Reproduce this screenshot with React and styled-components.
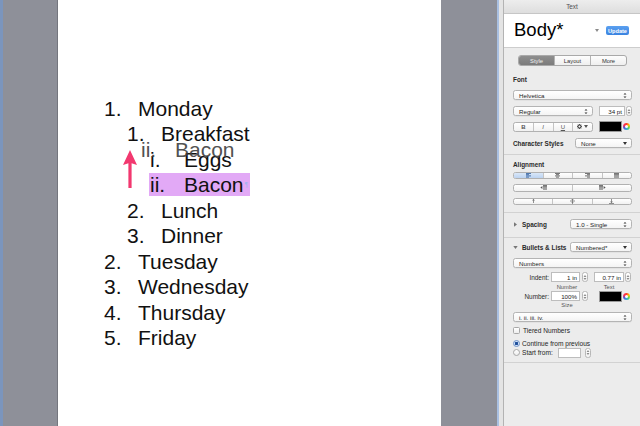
import React from 'react';
import styled, { createGlobalStyle } from 'styled-components';

const Global = createGlobalStyle`
  html, body { margin: 0; padding: 0; width: 640px; height: 426px; overflow: hidden; }
  body { font-family: "Liberation Sans", Arial, sans-serif; }
  #root { width: 640px; height: 426px; }
`;

const Screen = styled.div`
  display: flex;
  width: 640px;
  height: 426px;
  overflow: hidden;
  background: #8e9099;
`;

const EdgeStrip = styled.div`
  flex: 0 0 3px;
  background: #7b95bd;
`;

const Canvas = styled.div`
  flex: 0 0 494px;
  display: flex;
  padding-left: 55px;
  box-sizing: border-box;
  background: #8e9099;
`;

const Page = styled.div`
  position: relative;
  flex: 0 0 383px;
  height: 100%;
  background: #fff;
  box-shadow: -1px 0 0 #74767e;
  padding-top: 96px;
  box-sizing: border-box;
  font-family: "Liberation Sans", Arial, sans-serif;
  font-size: 21px;
  line-height: 25.45px;
  color: #111;
`;

const Row = styled.div`
  display: flex;
  height: 25.45px;
  padding-left: ${p => 46 + 23 * (p.$level - 1)}px;
  white-space: nowrap;
`;

const Num = styled.span`
  flex: 0 0 34px;
`;

const Highlight = styled.span`
  display: flex;
  margin-left: -1px;
  padding-left: 1px;
  background: linear-gradient(#e2a9f6, #e2a9f6) 0 1px / 100% 23px no-repeat;
`;

const EndMark = styled.span`
  display: inline-block;
  width: 5px;
  font-size: 7px;
  color: #9db4ee;
  line-height: 25px;
  padding-left: 1px;
`;

const Ghost = styled.div`
  position: absolute;
  left: 83px;
  top: 137px;
  display: flex;
  color: #404040;
  opacity: 0.9;
  white-space: nowrap;
`;

const ArrowSvg = styled.svg`
  position: absolute;
  left: 64px;
  top: 150px;
`;

const Gutter = styled.div`
  flex: 0 0 6px;
  display: flex;
`;
const GutterLine = styled.div`
  flex: 0 0 2px;
  background: #a9c0e2;
`;
const GutterFill = styled.div`
  flex: 1;
  background: #e4e4e4;
`;

const Panel = styled.div`
  flex: 0 0 136px;
  display: flex;
  flex-direction: column;
  background: #ececec;
  border-left: 1px solid #b3b3b3;
  font-family: "Liberation Sans", Arial, sans-serif;
  font-size: 6.6px;
  color: #1e1e1e;
`;

const Header = styled.div`
  height: 13px;
  display: flex;
  align-items: center;
  justify-content: center;
  background: linear-gradient(#ededed, #dedede);
  border-bottom: 1px solid #c6c6c6;
  color: #505050;
  font-size: 6.4px;
`;

const StyleBox = styled.div`
  height: 33px;
  display: flex;
  align-items: center;
  padding: 0 11px 0 10px;
  background: #fff;
  border-bottom: 1px solid #cdcdcd;
`;

const StyleName = styled.div`
  flex: 1;
  font-size: 18.5px;
  color: #000;
  padding-bottom: 2px;
`;

const DownTri = styled.span`
  width: 0;
  height: 0;
  border-left: 2.5px solid transparent;
  border-right: 2.5px solid transparent;
  border-top: 3.5px solid ${p => p.$color || '#8a8a8a'};
  margin-right: ${p => p.$mr || 0}px;
`;

const UpdateBtn = styled.div`
  width: 23px;
  height: 9px;
  border-radius: 2px;
  background: linear-gradient(#5aa0f0, #3a83e0);
  color: #fff;
  font-size: 5.6px;
  font-weight: bold;
  display: flex;
  align-items: center;
  justify-content: center;
`;

const Tabs = styled.div`
  display: flex;
  margin: 7px 0 0 14px;
  width: 109px;
  height: 11px;
  border: 1px solid #a9a9a9;
  border-radius: 3px;
  box-sizing: border-box;
  overflow: hidden;
  background: linear-gradient(#fdfdfd, #efefef);
`;

const Tab = styled.div`
  flex: 1;
  display: flex;
  align-items: center;
  justify-content: center;
  font-size: 5.8px;
  color: ${p => (p.$active ? '#f2f2f2' : '#333')};
  background: ${p => (p.$active ? 'linear-gradient(#8e8e8e, #7b7b7b)' : 'transparent')};
  & + & { border-left: 1px solid #b3b3b3; }
`;

const Section = styled.div`
  display: flex;
  flex-direction: column;
  padding: ${p => p.$pt}px 8px ${p => p.$pb}px 9px;
  border-bottom: ${p => (p.$noBorder ? 'none' : '1px solid #d2d2d2')};
`;

const Label = styled.div`
  height: 8px;
  line-height: 8px;
  font-weight: bold;
  font-size: 6.4px;
  color: #2a2a2a;
  margin-top: ${p => p.$mt || 0}px;
`;

const HRow = styled.div`
  display: flex;
  align-items: center;
  height: ${p => p.$h || 10}px;
  margin-top: ${p => p.$mt || 0}px;
  gap: ${p => p.$gap || 0}px;
`;

const Popup = styled.div`
  flex: ${p => (p.$w ? `0 0 ${p.$w}px` : '1')};
  height: ${p => p.$h || 10}px;
  box-sizing: border-box;
  display: flex;
  align-items: center;
  padding: 0 4px 0 5px;
  margin-left: ${p => p.$ml || 0}px;
  border: 1px solid #b4b4b4;
  border-radius: 2.5px;
  background: linear-gradient(#ffffff, #f4f4f4);
  box-shadow: 0 0.5px 0 rgba(0,0,0,0.08);
  font-size: 6.2px;
  color: #1e1e1e;
  white-space: nowrap;
`;

const PopupText = styled.span`
  flex: 1;
`;

const SideLabel = styled.div`
  flex: 1;
  font-size: 6.4px;
  font-weight: ${p => (p.$bold ? 'bold' : 'normal')};
  color: #2a2a2a;
  display: flex;
  align-items: center;
  gap: 4px;
`;

const Field = styled.div`
  flex: 0 0 ${p => p.$w}px;
  height: 10px;
  box-sizing: border-box;
  border: 1px solid #bdbdbd;
  background: #fff;
  display: flex;
  align-items: center;
  justify-content: flex-end;
  padding-right: 2px;
  font-size: 6.2px;
  color: #222;
  margin-left: ${p => p.$ml || 0}px;
`;

const Stepper = styled.div`
  flex: 0 0 6px;
  height: 10px;
  box-sizing: border-box;
  border: 1px solid #b8b8b8;
  border-radius: 2.5px;
  background: linear-gradient(#fff, #f0f0f0);
  margin-left: ${p => p.$ml || 1}px;
  display: flex;
  align-items: center;
  justify-content: center;
`;

const Segmented = styled.div`
  flex: ${p => (p.$w ? `0 0 ${p.$w}px` : '1')};
  height: ${p => p.$h || 10}px;
  display: flex;
  box-sizing: border-box;
  border: 1px solid #b1b1b1;
  border-radius: 2.5px;
  overflow: hidden;
  background: linear-gradient(#ffffff, #f1f1f1);
  margin-top: ${p => p.$mt || 0}px;
`;

const Seg = styled.div`
  flex: 1;
  display: flex;
  align-items: center;
  justify-content: center;
  font-size: 6px;
  font-weight: ${p => (p.$bold ? 'bold' : 'normal')};
  font-style: ${p => (p.$italic ? 'italic' : 'normal')};
  text-decoration: ${p => (p.$underline ? 'underline' : 'none')};
  color: #555;
  background: ${p => (p.$active ? 'linear-gradient(#d9e7f8, #bcd3f1)' : 'transparent')};
  & + & { border-left: 1px solid #c4c4c4; }
`;

const ColorWell = styled.div`
  flex: 0 0 23px;
  height: 11px;
  box-sizing: border-box;
  border: 1px solid #9a9a9a;
  background: #000;
  margin-left: ${p => p.$ml || 0}px;
`;

const Wheel = styled.div`
  flex: 0 0 7px;
  height: 7px;
  border-radius: 50%;
  margin-left: 1px;
  background: conic-gradient(#ff3b30, #ffcc00, #4cd964, #34aadc, #5856d6, #ff2d55, #ff3b30);
  display: flex;
  align-items: center;
  justify-content: center;
  &::after {
    content: '';
    width: 3px;
    height: 3px;
    border-radius: 50%;
    background: #fff;
  }
`;

const SubLabels = styled.div`
  display: flex;
  height: 7px;
  align-items: center;
  margin-top: ${p => p.$mt || 0}px;
  font-size: 5.8px;
  color: #555;
`;

const SubLabel = styled.span`
  position: relative;
  width: 0;
  display: flex;
  justify-content: center;
  margin-left: ${p => p.$ml}px;
  white-space: nowrap;
`;

const RightLabel = styled.span`
  flex: 0 0 38px;
  text-align: right;
  padding-right: 2px;
  box-sizing: border-box;
  font-size: 6.4px;
  color: #2a2a2a;
`;

const Check = styled.span`
  width: 7px;
  height: 7px;
  box-sizing: border-box;
  border: 1px solid #a8a8a8;
  border-radius: ${p => (p.$round ? '50%' : '1.5px')};
  background: ${p => (p.$on ? 'radial-gradient(circle, #1f4f9a 0 1.4px, #cfe0f6 1.6px)' : 'linear-gradient(#fff, #eee)')};
  border-color: ${p => (p.$on ? '#6f93c9' : '#a8a8a8')};
  flex-shrink: 0;
`;

const Arrows = () => (
  <svg width="4" height="7" viewBox="0 0 4 7">
    <path d="M0.5 2.6 L2 1 L3.5 2.6 Z M0.5 4.4 L2 6 L3.5 4.4 Z" fill="#333" />
  </svg>
);

const StepArrows = () => (
  <svg width="4" height="7" viewBox="0 0 4 7">
    <path d="M0.6 2.8 L2 1.2 L3.4 2.8 Z M0.6 4.2 L2 5.8 L3.4 4.2 Z" fill="#666" />
  </svg>
);

const AlignIcon = ({ kind, color = '#555' }) => {
  const lines = {
    left: [[0, 5], [0, 3], [0, 5], [0, 3]],
    center: [[0, 5], [1, 3], [0, 5], [1, 3]],
    right: [[0, 5], [2, 3], [0, 5], [2, 3]],
    justify: [[0, 5], [0, 5], [0, 5], [0, 5]],
  }[kind];
  return (
    <svg width="5" height="5" viewBox="0 0 5 5">
      {lines.map(([x, w], i) => (
        <rect key={i} x={x} y={i * 1.2 + 0.1} width={w} height="0.8" fill={color} />
      ))}
    </svg>
  );
};

const IndentIcon = ({ dir }) => (
  <svg width="7" height="5" viewBox="0 0 7 5">
    {[0, 1, 2, 3].map(i => (
      <rect key={i} x={dir === 'out' ? 3 : 0} y={i * 1.2 + 0.1} width="4" height="0.8" fill="#555" />
    ))}
    {dir === 'out' ? (
      <path d="M2.4 1 L0.4 2.5 L2.4 4 Z" fill="#555" />
    ) : (
      <path d="M4.6 1 L6.6 2.5 L4.6 4 Z" fill="#555" />
    )}
  </svg>
);

const VAlignIcon = ({ pos }) => (
  <svg width="5" height="6" viewBox="0 0 5 6">
    {pos === 'top' && <><rect x="0" y="0" width="5" height="0.8" fill="#777" /><rect x="2.1" y="1" width="0.8" height="4" fill="#777" /><path d="M1 2.6 L2.5 1 L4 2.6 Z" fill="#777" /></>}
    {pos === 'mid' && <><rect x="0" y="2.6" width="5" height="0.8" fill="#777" /><rect x="2.1" y="0" width="0.8" height="6" fill="#777" /><path d="M1.2 1 L2.5 2.3 L3.8 1 Z M1.2 5 L2.5 3.7 L3.8 5 Z" fill="#777" /></>}
    {pos === 'bottom' && <><rect x="0" y="5.2" width="5" height="0.8" fill="#777" /><rect x="2.1" y="1" width="0.8" height="4" fill="#777" /><path d="M1 3.4 L2.5 5 L4 3.4 Z" fill="#777" /></>}
  </svg>
);

const GearWrap = styled.span`
  display: flex;
  align-items: center;
  gap: 1.5px;
`;

const Gear = () => (
  <GearWrap>
    <svg width="5" height="5" viewBox="0 0 10 10">
      <circle cx="5" cy="5" r="3.2" fill="none" stroke="#444" strokeWidth="2.2" />
      <path d="M5 0 V2 M5 8 V10 M0 5 H2 M8 5 H10 M1.5 1.5 L2.8 2.8 M7.2 7.2 L8.5 8.5 M8.5 1.5 L7.2 2.8 M1.5 8.5 L2.8 7.2" stroke="#444" strokeWidth="1.6" />
    </svg>
    <DownTri $color="#555" />
  </GearWrap>
);

const Disclosure = ({ open }) => (
  <svg width="5" height="5" viewBox="0 0 5 5">
    {open ? <path d="M0.3 1 L4.7 1 L2.5 4 Z" fill="#777" /> : <path d="M1 0.3 L4 2.5 L1 4.7 Z" fill="#777" />}
  </svg>
);

const docRows = [
  { level: 1, num: '1.', text: 'Monday' },
  { level: 2, num: '1.', text: 'Breakfast' },
  { level: 3, num: 'i.', text: 'Eggs' },
  { level: 3, num: 'ii.', text: 'Bacon', selected: true },
  { level: 2, num: '2.', text: 'Lunch' },
  { level: 2, num: '3.', text: 'Dinner' },
  { level: 1, num: '2.', text: 'Tuesday' },
  { level: 1, num: '3.', text: 'Wednesday' },
  { level: 1, num: '4.', text: 'Thursday' },
  { level: 1, num: '5.', text: 'Friday' },
];

export default function App() {
  return (
    <>
      <Global />
      <Screen>
        <EdgeStrip />
        <Canvas>
          <Page>
            {docRows.map((r, i) => (
              <Row key={i} $level={r.level}>
                {r.selected ? (
                  <Highlight>
                    <Num>{r.num}</Num>
                    <span>{r.text}</span>
                    <EndMark>¶</EndMark>
                  </Highlight>
                ) : (
                  <>
                    <Num>{r.num}</Num>
                    <span>{r.text}</span>
                  </>
                )}
              </Row>
            ))}
            <Ghost>
              <Num>ii.</Num>
              <span>Bacon</span>
            </Ghost>
            <ArrowSvg width="16" height="40" viewBox="0 0 16 40">
              <path d="M8 0 L15 15 L9.6 13.2 L9.6 38 L6.4 38 L6.4 13.2 L1 15 Z" fill="#f2386f" />
            </ArrowSvg>
          </Page>
        </Canvas>
        <Gutter>
          <GutterLine />
          <GutterFill />
        </Gutter>
        <Panel>
          <Header>Text</Header>
          <StyleBox>
            <StyleName>Body*</StyleName>
            <DownTri $mr={7} />
            <UpdateBtn>Update</UpdateBtn>
          </StyleBox>
          <Tabs>
            <Tab $active>Style</Tab>
            <Tab>Layout</Tab>
            <Tab>More</Tab>
          </Tabs>

          <Section $pt={10} $pb={6}>
            <Label>Font</Label>
            <HRow $mt={6}>
              <Popup><PopupText>Helvetica</PopupText><Arrows /></Popup>
            </HRow>
            <HRow $mt={6}>
              <Popup $w={80}><PopupText>Regular</PopupText><Arrows /></Popup>
              <Field $w={26} $ml={6}>34 pt</Field>
              <Stepper><StepArrows /></Stepper>
            </HRow>
            <HRow $mt={5} $h={11}>
              <Segmented $w={80} $h={10}>
                <Seg $bold>B</Seg>
                <Seg $italic>I</Seg>
                <Seg $underline>U</Seg>
                <Seg><Gear /></Seg>
              </Segmented>
              <ColorWell $ml={6} />
              <Wheel />
            </HRow>
            <HRow $mt={6}>
              <SideLabel $bold>Character Styles</SideLabel>
              <Popup $w={57}><PopupText>None</PopupText><DownTri $color="#333" /></Popup>
            </HRow>
          </Section>

          <Section $pt={6} $pb={7}>
            <Label>Alignment</Label>
            <Segmented $mt={3}>
              <Seg $active><AlignIcon kind="left" color="#2f5d9c" /></Seg>
              <Seg><AlignIcon kind="center" /></Seg>
              <Seg><AlignIcon kind="right" /></Seg>
              <Seg><AlignIcon kind="justify" /></Seg>
            </Segmented>
            <Segmented $mt={5}>
              <Seg><IndentIcon dir="out" /></Seg>
              <Seg><IndentIcon dir="in" /></Seg>
            </Segmented>
            <Segmented $mt={6}>
              <Seg><VAlignIcon pos="top" /></Seg>
              <Seg><VAlignIcon pos="mid" /></Seg>
              <Seg><VAlignIcon pos="bottom" /></Seg>
            </Segmented>
          </Section>

          <Section $pt={6} $pb={8}>
            <HRow>
              <SideLabel $bold><Disclosure /> Spacing</SideLabel>
              <Popup $w={62}><PopupText>1.0 - Single</PopupText><Arrows /></Popup>
            </HRow>
          </Section>

          <Section $pt={4} $pb={4}>
            <HRow>
              <SideLabel $bold><Disclosure open /> Bullets &amp; Lists</SideLabel>
              <Popup $w={62}><PopupText>Numbered*</PopupText><DownTri $color="#333" /></Popup>
            </HRow>
            <HRow $mt={6}>
              <Popup><PopupText>Numbers</PopupText><Arrows /></Popup>
            </HRow>
            <HRow $mt={4}>
              <RightLabel>Indent:</RightLabel>
              <Field $w={29}>1 in</Field>
              <Stepper $ml={2}><StepArrows /></Stepper>
              <Field $w={30} $ml={6}>0.77 in</Field>
              <Stepper><StepArrows /></Stepper>
            </HRow>
            <SubLabels $mt={1}>
              <SubLabel $ml={54}>Number</SubLabel>
              <SubLabel $ml={42}>Text</SubLabel>
            </SubLabels>
            <HRow $mt={1}>
              <RightLabel>Number:</RightLabel>
              <Field $w={29}>100%</Field>
              <Stepper $ml={2}><StepArrows /></Stepper>
              <ColorWell $ml={11} />
              <Wheel />
            </HRow>
            <SubLabels>
              <SubLabel $ml={54}>Size</SubLabel>
            </SubLabels>
            <HRow $mt={4}>
              <Popup><PopupText>i. ii. iii. iv.</PopupText><Arrows /></Popup>
            </HRow>
            <HRow $mt={4} $h={8} $gap={3}>
              <Check />
              <span>Tiered Numbers</span>
            </HRow>
            <HRow $mt={5} $h={8} $gap={2}>
              <Check $round $on />
              <span>Continue from previous</span>
            </HRow>
            <HRow $h={11} $gap={2}>
              <Check $round />
              <span>Start from:</span>
              <Field $w={23} $ml={3} />
              <Stepper $ml={2}><StepArrows /></Stepper>
            </HRow>
          </Section>
        </Panel>
      </Screen>
    </>
  );
}
